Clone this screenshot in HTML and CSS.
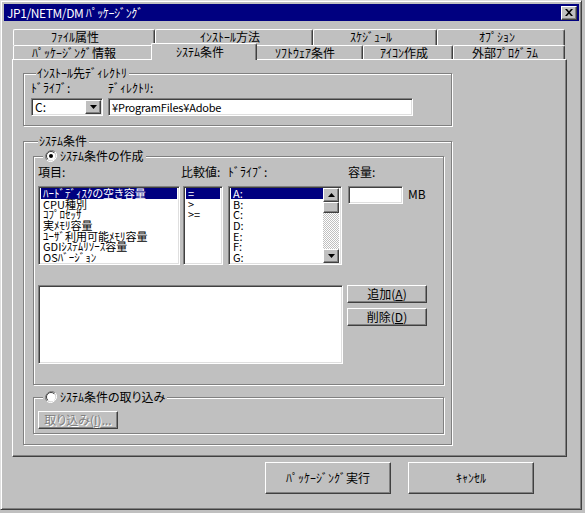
FILE: index.html
```html
<!DOCTYPE html>
<html lang="ja">
<head>
<meta charset="utf-8">
<title>JP1/NETM/DM ﾊﾟｯｹｰｼﾞﾝｸﾞ</title>
<link rel="stylesheet" href="styles.css">
</head>
<body>
<div class="window">
  <div class="titlebar">
    <span class="title">JP1/NETM/DM ﾊﾟｯｹｰｼﾞﾝｸﾞ</span>
    <span class="close"><svg width="8" height="7" viewBox="0 0 8 7"><path d="M0 0h2l2 2.3L6 0h2L5 3.5 8 7H6L4 4.7 2 7H0l3-3.5z" fill="#000"/></svg></span>
  </div>
  <div class="client">
    <div class="tabs">
      <div class="tabrow">
        <div class="tab first t1a">ﾌｧｲﾙ属性</div>
        <div class="tab t1b">ｲﾝｽﾄｰﾙ方法</div>
        <div class="tab t1c">ｽｹｼﾞｭｰﾙ</div>
        <div class="tab t1d">ｵﾌﾟｼｮﾝ</div>
      </div>
      <div class="tabrow front">
        <div class="tab first t2a">ﾊﾟｯｹｰｼﾞﾝｸﾞ情報</div>
        <div class="tab sel t2b">ｼｽﾃﾑ条件</div>
        <div class="tab t2c">ｿﾌﾄｳｪｱ条件</div>
        <div class="tab t2d">ｱｲｺﾝ作成</div>
        <div class="tab t2e">外部ﾌﾟﾛｸﾞﾗﾑ</div>
      </div>
    </div>
    <div class="panel">
      <fieldset class="group g-install">
        <legend>ｲﾝｽﾄｰﾙ先ﾃﾞｨﾚｸﾄﾘ</legend>
        <div class="row-labels">
          <span class="lbl-drive">ﾄﾞﾗｲﾌﾞ:</span>
          <span>ﾃﾞｨﾚｸﾄﾘ:</span>
        </div>
        <div class="row-fields">
          <div class="combo sunken">
            <span class="combo-text">C:</span>
            <span class="raised combo-btn"><svg width="7" height="4" viewBox="0 0 7 4"><path d="M0 0h7L3.5 4z" fill="#000"/></svg></span>
          </div>
          <div class="textbox sunken dir">¥ProgramFiles¥Adobe</div>
        </div>
      </fieldset>

      <fieldset class="group g-sys">
        <legend>ｼｽﾃﾑ条件</legend>
        <fieldset class="group g-create">
          <legend><span class="radio"><svg width="12" height="12" viewBox="0 0 12 12"><path d="M10.2 1.8A6 6 0 0 0 1.8 10.2" fill="none" stroke="#808080"/><path d="M1.8 10.2A6 6 0 0 0 10.2 1.8" fill="none" stroke="#fff"/><circle cx="6" cy="6" r="4.5" fill="#fff"/><path d="M9.2 2.8A4.5 4.5 0 0 0 2.8 9.2" fill="none" stroke="#404040"/><circle cx="6" cy="6" r="2" fill="#000"/></svg></span>ｼｽﾃﾑ条件の作成</legend>
          <div class="row-cols">
            <span class="col-item">項目:</span>
            <span class="col-cmp">比較値:</span>
            <span class="col-drv">ﾄﾞﾗｲﾌﾞ:</span>
            <span>容量:</span>
          </div>
          <div class="row-lists">
            <div class="list sunken l-item">
              <div class="item selected">ﾊｰﾄﾞﾃﾞｨｽｸの空き容量</div>
              <div class="item">CPU種別</div>
              <div class="item">ｺﾌﾟﾛｾｯｻ</div>
              <div class="item">実ﾒﾓﾘ容量</div>
              <div class="item">ﾕｰｻﾞ利用可能ﾒﾓﾘ容量</div>
              <div class="item">GDIｼｽﾃﾑﾘｿｰｽ容量</div>
              <div class="item">OSﾊﾞｰｼﾞｮﾝ</div>
            </div>
            <div class="list sunken l-cmp">
              <div class="item selected">=</div>
              <div class="item">&gt;</div>
              <div class="item">&gt;=</div>
            </div>
            <div class="list sunken l-drv">
              <div class="items">
                <div class="item selected">A:</div>
                <div class="item">B:</div>
                <div class="item">C:</div>
                <div class="item">D:</div>
                <div class="item">E:</div>
                <div class="item">F:</div>
                <div class="item">G:</div>
              </div>
              <div class="scrollbar">
                <span class="raised sb-btn"><svg width="7" height="4" viewBox="0 0 7 4"><path d="M3.5 0L7 4H0z" fill="#000"/></svg></span>
                <span class="raised sb-thumb"></span>
                <span class="sb-track"></span>
                <span class="raised sb-btn"><svg width="7" height="4" viewBox="0 0 7 4"><path d="M0 0h7L3.5 4z" fill="#000"/></svg></span>
              </div>
            </div>
            <div class="textbox sunken cap"></div>
            <span class="unit">MB</span>
          </div>
          <div class="row-big">
            <div class="list sunken l-big"></div>
            <div class="side-btns">
              <div class="btn raised small">追加(<u>A</u>)</div>
              <div class="btn raised small">削除(<u>D</u>)</div>
            </div>
          </div>
        </fieldset>
        <fieldset class="group g-import">
          <legend><span class="radio"><svg width="12" height="12" viewBox="0 0 12 12"><path d="M10.2 1.8A6 6 0 0 0 1.8 10.2" fill="none" stroke="#808080"/><path d="M1.8 10.2A6 6 0 0 0 10.2 1.8" fill="none" stroke="#fff"/><circle cx="6" cy="6" r="4.5" fill="#fff"/><path d="M9.2 2.8A4.5 4.5 0 0 0 2.8 9.2" fill="none" stroke="#404040"/></svg></span>ｼｽﾃﾑ条件の取り込み</legend>
          <div class="btn raised small disabled import">取り込み(<u>I</u>)...</div>
        </fieldset>
      </fieldset>
    </div>
    <div class="footer">
      <div class="btn raised big">ﾊﾟｯｹｰｼﾞﾝｸﾞ実行</div>
      <div class="btn raised big">ｷｬﾝｾﾙ</div>
    </div>
  </div>
</div>
</body>
</html>
```
FILE: styles.css
```css
* { box-sizing: border-box; }
html, body { margin: 0; }
body {
  background: #c0c0c0;
  font-family: "Noto Sans CJK JP", "Liberation Sans", sans-serif;
  font-size: 12px;
  line-height: 12px;
  color: #000;
  font-feature-settings: "palt";
}
.window {
  width: 582px;
  height: 510px;
  border: 1px solid;
  border-color: #dfdfdf #404040 #404040 #dfdfdf;
  box-shadow: inset 1px 1px #fff, inset -1px -1px #808080;
  padding: 3px 2px 3px 3px;
}
.titlebar {
  height: 17px;
  background: #000080;
  color: #fff;
  display: flex;
  align-items: center;
  padding: 0 2px 0 3px;
}
.title { font-size: 12px; letter-spacing: -0.4px; }
.close {
  margin-left: auto;
  width: 16px;
  height: 14px;
  background: #c0c0c0;
  border: 1px solid;
  border-color: #fff #404040 #404040 #fff;
  box-shadow: inset -1px -1px #808080;
  display: flex;
  align-items: center;
  justify-content: center;
}
.client { padding: 8px 0 0 8px; }

/* tabs */
.tabs { margin-left: 1px; width: 552px; }
.tabrow { display: flex; height: 16px; align-items: flex-start; }
.tabrow.front { height: 14px; }
.tab {
  height: 16px;
  border-top: 1px solid #fff;
  border-left: 1px solid #fff;
  border-right: 1px solid #404040;
  box-shadow: inset -1px 0 #808080;
  border-radius: 2px 2px 0 0;
  text-align: center;
  line-height: 14px;
  padding-right: 8px;
  white-space: nowrap;
  background: #c0c0c0;
}
.tabrow.front .tab { height: 14px; line-height: 13px; }
.tab.first { padding-right: 18px; }
.t1a { width: 142px; }
.t1b { width: 158px; }
.t1c { width: 124px; }
.t1d { width: 128px; }
.t2a { width: 140px; }
.t2b { width: 102px; }
.t2c { width: 108px; }
.t2d { width: 90px; }
.t2e { width: 112px; }
.tabrow.front .tab.sel {
  width: 106px;
  height: 17px;
  margin: -2px -2px -1px;
  line-height: 15px;
  position: relative;
  z-index: 1;
}

/* panel */
.panel {
  width: 555px;
  height: 398px;
  border: 1px solid;
  border-color: #fff #404040 #404040 #fff;
  box-shadow: inset -1px -1px #808080;
  padding: 0 0 0 10px;
}

.group {
  margin: 0;
  padding: 0;
  min-width: 0;
  border: 1px solid #808080;
  box-shadow: inset 1px 1px #fff, 1px 1px #fff;
}
.group > legend {
  padding: 0 2px 0 1px;
  margin-left: 5px;
  background: #c0c0c0;
  line-height: 12px;
  height: 12px;
  white-space: nowrap;
}
.radio { display: inline-block; width: 12px; height: 12px; vertical-align: top; margin: 0 3px 0 1px; }
.radio svg { display: block; }

.sunken {
  border: 1px solid;
  border-color: #808080 #fff #fff #808080;
  box-shadow: inset 1px 1px #404040, inset -1px -1px #dfdfdf;
  background: #fff;
}
.raised {
  background: #c0c0c0;
  border: 1px solid;
  border-color: #fff #404040 #404040 #fff;
  box-shadow: inset -1px -1px #808080;
}

.g-install { margin-top: 7px; width: 429px; padding: 3px 0 9px 7px; }
.row-labels { display: flex; height: 12px; }
.lbl-drive { width: 77px; }
.row-fields { display: flex; margin-top: 4px; }
.combo { width: 72px; height: 18px; display: flex; align-items: center; padding: 1px; margin-right: 5px; }
.combo-text { flex: 1; padding-left: 2px; line-height: 14px; }
.combo-btn { width: 16px; height: 14px; display: flex; align-items: center; justify-content: center; }
.textbox { height: 18px; }
.dir { width: 305px; padding-left: 3px; line-height: 16px; font-size: 11px; letter-spacing: -0.2px; }

.g-sys { margin-top: 9px; width: 429px; padding: 3px 0 10px 9px; }
.g-create { width: 411px; padding: 4px 0 20px 4px; }
.row-cols { display: flex; height: 12px; }
.col-item { width: 143px; }
.col-cmp { width: 47px; }
.col-drv { width: 120px; }
.row-lists { display: flex; align-items: flex-start; margin-top: 8px; }
.list { height: 79px; padding: 1px 2px 0; overflow: hidden; }
.item { height: 10.7px; line-height: 10.7px; font-size: 11px; padding-left: 2px; white-space: nowrap; }
.item.selected { background: #000080; color: #fff; }
.l-item { width: 142px; }
.l-cmp { width: 40px; margin-left: 3px; }
.l-drv { width: 114px; margin-left: 5px; display: flex; padding: 1px 2px 1px 2px; }
.items { flex: 1; }
.scrollbar { width: 16px; display: flex; flex-direction: column; }
.sb-btn { height: 14px; display: flex; align-items: center; justify-content: center; }
.sb-thumb { height: 11px; }
.sb-track { flex: 1; background: repeating-conic-gradient(#fff 0 25%, #c0c0c0 0 50%) 0 0 / 2px 2px; }
.cap { width: 55px; margin-left: 6px; }
.unit { margin-left: 5px; line-height: 16px; }

.row-big { display: flex; align-items: flex-start; margin-top: 20px; }
.l-big { width: 305px; }
.side-btns { margin-left: 4px; display: flex; flex-direction: column; gap: 5px; }
.btn { display: flex; align-items: center; justify-content: center; white-space: nowrap; }
.btn.small { width: 80px; height: 18px; line-height: 14px; }
.btn.disabled { color: #808080; text-shadow: 1px 1px #fff; }
.import { width: 102px; }

.g-import { margin-top: 6px; width: 411px; padding: 8px 0 4px 4px; }

.footer { display: flex; justify-content: flex-end; gap: 17px; width: 555px; padding-right: 33px; margin-top: 5px; }
.btn.big { width: 126px; height: 32px; }
```
